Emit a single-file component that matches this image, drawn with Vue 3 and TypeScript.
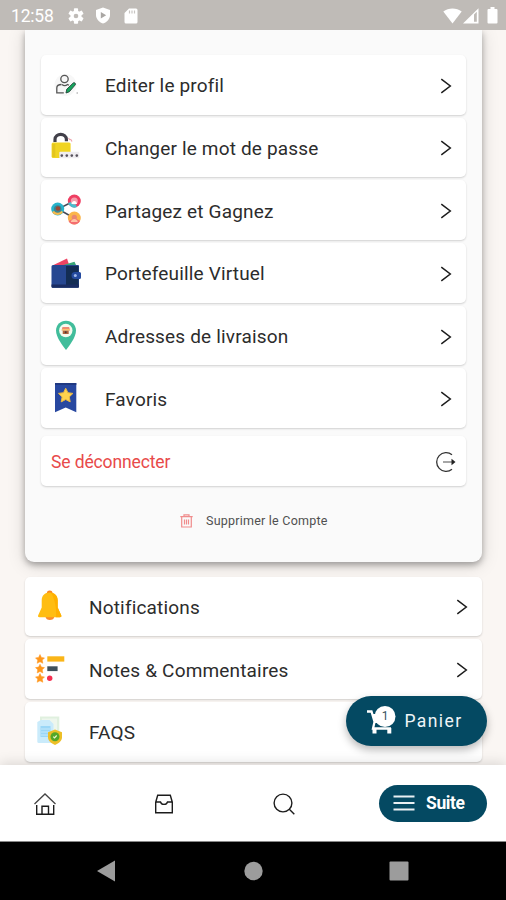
<script setup lang="ts">
interface MenuItem {
  icon: string
  label: string
}

const accountItems: MenuItem[] = [
  { icon: 'profile', label: 'Editer le profil' },
  { icon: 'lock', label: 'Changer le mot de passe' },
  { icon: 'share', label: 'Partagez et Gagnez' },
  { icon: 'wallet', label: 'Portefeuille Virtuel' },
  { icon: 'pin', label: 'Adresses de livraison' },
  { icon: 'bookmark', label: 'Favoris' },
]

const generalItems: MenuItem[] = [
  { icon: 'bell', label: 'Notifications' },
  { icon: 'reviews', label: 'Notes & Commentaires' },
  { icon: 'faq', label: 'FAQS' },
]
</script>

<template>
  <div class="screen">
    <header class="status">
      <span class="clock">12:58</span>
      <svg class="gear" width="16" height="16" viewBox="0 0 16 16">
        <g fill="#fff">
          <circle cx="8" cy="8" r="5.6" />
          <rect v-for="a in [0, 60, 120]" :key="a" x="5.9" y="0.3" width="4.2" height="15.4" rx="0.8" :transform="`rotate(${a} 8 8)`" />
        </g>
        <circle cx="8" cy="8" r="2.3" fill="#bfbbb7" />
      </svg>
      <svg class="shield" width="16" height="17" viewBox="0 0 16 17">
        <path d="M8 .5 15 3v5c0 4-3 7.200-7 8.500C4 15.200 1 12 1 8V3z" fill="#fff" />
        <path d="M5.800 5 11.200 8.200 5.800 11.400z" fill="#aaa7a4" />
      </svg>
      <svg class="sd" width="14" height="16" viewBox="0 0 14 16">
        <path d="M5 .5h7a1.500 1.500 0 0 1 1.500 1.500v12a1.500 1.500 0 0 1-1.500 1.500H2A1.500 1.500 0 0 1 .5 14V5z" fill="#fff" />
        <path d="M5.500 2.500v3M8 2.500v3M10.500 2.500v3" stroke="#c9c6c3" stroke-width="1.200" />
      </svg>
      <span class="grow"></span>
      <svg width="19" height="16" viewBox="0 0 19 16">
        <path d="M.3 3.600C5.500-.6 13.500-.6 18.700 3.600L9.500 15.500z" fill="#fff" />
      </svg>
      <svg class="signal" width="16" height="16" viewBox="0 0 16 16">
        <path d="M0 15.500 15.500.2v15.300z" fill="#fff" />
        <path d="M11 6.500 13.800 3.800v10h-2.800z" fill="#bfbbb7" />
      </svg>
      <svg class="battery" width="11" height="17" viewBox="0 0 11 17">
        <path d="M3.500 0h4v2H9.500a1 1 0 0 1 1 1v12.500a1 1 0 0 1-1 1h-8a1 1 0 0 1-1-1V3a1 1 0 0 1 1-1h2z" fill="#fff" />
      </svg>
    </header>

    <main class="content">
      <section class="card">
        <button v-for="item in accountItems" :key="item.icon" class="row">
          <svg v-if="item.icon === 'profile'" class="icon" viewBox="0 0 32 32">
            <circle cx="15.500" cy="16" r="11" fill="#f7f7f7" />
            <g fill="none" stroke="#555" stroke-width="1.300">
              <circle cx="14.500" cy="10" r="3.700" />
              <path d="M11.500 15.500C8 15.500 6.800 17 6.800 19v4.800h7M12 15.500c1.500 1.300 4 1.300 5.500 0l1.500.8" />
            </g>
            <path d="m16 24 .8-3.800 6.500-6.300c1.200-.8 2.700.6 2 1.900l-6 7z" fill="#14a45c" stroke="#23463a" stroke-width=".9" />
            <path d="M26.500 24h1.500" stroke="#999" />
          </svg>
          <svg v-else-if="item.icon === 'lock'" class="icon" viewBox="0 0 32 32">
            <path d="M5 11V8.500c0-6.800 11.400-6.800 11.400 0v1.800" fill="none" stroke="#42404a" stroke-width="3.200" />
            <rect x="1.600" y="11.500" width="19" height="15.500" rx="1.500" fill="#f0d422" />
            <path d="M2.300 13h3v13h-3z" fill="#e3c51e" />
            <path d="m18.500 7 1.500 2M20.500 8l1.500 2.500" stroke="#eda3ac" stroke-width="1.200" />
            <rect x="9.300" y="20.800" width="20" height="6.400" rx="1" fill="#efedf1" />
            <g fill="#57525d">
              <circle v-for="x in [11.800, 16.800, 21.800, 26.800]" :key="x" :cx="x" cy="24.600" r="1.300" />
            </g>
          </svg>
          <svg v-else-if="item.icon === 'share'" class="icon" viewBox="0 0 32 32">
            <path d="M24 7 8 15l16 9" fill="none" stroke="#444a56" stroke-width="1.500" />
            <circle cx="24.300" cy="7" r="6.500" fill="#ef3e62" />
            <path d="M18 9a6.500 6.500 0 0 0 9 4l-3-6z" fill="#48bccd" />
            <circle cx="24.300" cy="7" r="3.500" fill="#f59cab" />
            <path d="M21.500 10c.5-4 5-4 5.500 0z" fill="#fff" />
            <circle cx="7.700" cy="15" r="6.500" fill="#27b4cc" />
            <path d="M2 18a6.500 6.500 0 0 0 11 0l-5-3z" fill="#f8b94c" />
            <circle cx="7.700" cy="15" r="3.800" fill="#3d8592" />
            <circle cx="8" cy="14.500" r="2.300" fill="#994938" />
            <circle cx="24.300" cy="24" r="6.500" fill="#fbb54b" />
            <path d="M18.500 27a6.500 6.500 0 0 0 11.500 0l-5-3z" fill="#f46d71" />
            <circle cx="24.300" cy="23.300" r="2.600" fill="#e98672" />
            <path d="M20.800 28c.5-4 6.500-4 7 0z" fill="#ffc3a5" />
          </svg>
          <svg v-else-if="item.icon === 'wallet'" class="icon" viewBox="0 0 32 32">
            <path d="M3.500 8 17 1.600 19.500 9h-16z" fill="#ee4463" />
            <path d="M10 9 24.500 4.800 26.500 9z" fill="#38a578" />
            <path d="M3 8h25a1 1 0 0 1 1 1v20.500a1.300 1.300 0 0 1-1.300 1.300H3a1.500 1.500 0 0 1-1.500-1.500V9.500A1.500 1.500 0 0 1 3 8z" fill="#264791" />
            <path d="M16 9h12.500v20.500h-12.500z" fill="#132d54" />
            <path d="M1.500 27.500H29v2c0 1-.5 1.300-1.300 1.300H3c-1 0-1.500-.5-1.500-1.500z" fill="#192c62" />
            <path d="M25 15h4.500a1.500 1.500 0 0 1 1.500 1.500v4a1.500 1.500 0 0 1-1.500 1.500H25a3.500 3.500 0 0 1 0-7z" fill="#244a9f" />
            <circle cx="25.300" cy="18.500" r="1.500" fill="#9eb8ea" />
          </svg>
          <svg v-else-if="item.icon === 'pin'" class="icon" viewBox="0 0 32 32">
            <path d="M16 .8c5.800 0 10 4.300 10 9.800C26 17 20 25 16 30 12 25 6 17 6 10.600 6 5.100 10.200.8 16 .8z" fill="#41bd9b" />
            <circle cx="15.800" cy="10.500" r="6.700" fill="#f5faee" />
            <path d="M12.500 7h6.600l1 3.500h-8.600z" fill="#ef8b72" />
            <path d="M12.700 10.500h6V14h-6z" fill="#af613d" />
            <path d="M12 9.800h8" stroke="#ffd76d" />
            <circle cx="15.700" cy="12.300" r="1" fill="#453a36" />
          </svg>
          <svg v-else class="icon" viewBox="0 0 32 32">
            <path d="M5 1h21.300v29.300l-10.600-4.800L5 30.300z" fill="#2848a0" />
            <path d="M5 1h21.300v2H5z" fill="#203982" />
            <path d="m15.700 6.200 2.200 4.500 5 .7-3.600 3.500.9 5-4.500-2.400-4.500 2.400.9-5-3.600-3.500 5-.7z" fill="#ffd34e" stroke="#e9b744" />
          </svg>
          <span class="label">{{ item.label }}</span>
          <svg class="chevron" viewBox="0 0 12 16"><path d="m1.300 1.200 9 6.800-9 6.800" /></svg>
        </button>

        <button class="logout">
          <span>Se déconnecter</span>
          <svg width="22" height="22" viewBox="0 0 22 22" fill="none" stroke="#333" stroke-width="1.300">
            <path d="M17 3.700a9.400 9.400 0 1 0 0 14.600" />
            <path d="M8 11h9" stroke="#888" stroke-width="1.500" />
            <path d="m16.500 7.800 4 3.200-4 3.200z" fill="#222" stroke="none" />
          </svg>
        </button>
        <button class="delete">
          <svg width="13" height="14" viewBox="0 0 13 14" fill="none" stroke="#f08c8c" stroke-width="1.200">
            <path d="M.3 2.700h12.400M4 2.700V.8h5v1.900M1.700 3v10h9.600V3M4.500 5.500v5M6.500 5.500v5M8.500 5.500v5" />
          </svg>
          <span>Supprimer le Compte</span>
        </button>
      </section>

      <section class="list">
        <button v-for="item in generalItems" :key="item.icon" class="row wide">
          <svg v-if="item.icon === 'bell'" class="icon" viewBox="0 0 32 32">
            <circle cx="15.700" cy="3.500" r="2.900" fill="#fa8520" />
            <path d="M11.500 26.500h8.800c0 4.800-8.800 4.800-8.800 0z" fill="#fb8a2b" />
            <path d="M15.700 2.500c5 0 8 3.200 8 8v7l3.500 7.800c.5 1.200 0 2-1.300 2H5.500c-1.300 0-1.800-.8-1.300-2l3.500-7.800v-7c0-4.800 3-8 8-8z" fill="#ffbd12" />
            <path d="M17 2.800c4 .5 6.700 3.500 6.700 7.700v7l3.500 7.800c.5 1.200 0 2-1.300 2h-4c1-8-1-18-4.900-24.500z" fill="#ffb000" />
          </svg>
          <svg v-else-if="item.icon === 'reviews'" class="icon" viewBox="0 0 32 32">
            <path v-for="y in [0, 9.700, 19]" :key="y" :transform="`translate(0 ${y})`" d="m6 1.500 1.400 2.900 3.100.5-2.200 2.200.5 3.200L6 8.800l-2.800 1.500.5-3.200-2.200-2.200 3.100-.5z" fill="#ff971c" stroke="#ff971c" stroke-width=".5" />
            <path d="M13.300 3.300h17v5.300h-17z" fill="#fab518" />
            <path d="M13.300 13.300h10.300v4.800H13.300z" fill="#3e505c" />
            <circle cx="15.700" cy="25.200" r="2.700" fill="#f52e50" />
          </svg>
          <svg v-else class="icon" viewBox="0 0 32 32">
            <path d="M6 .5h19.300v22H6z" fill="#e0f0df" />
            <path d="M8 2.500h15v18H8z" fill="#eef6ed" />
            <path d="M7 4h8.500l4 4v19H4.500c-.8 0-1.200-.5-1.200-1.200V6z" fill="#caebfb" />
            <path d="M6.500 10h10v11h-10z" fill="#9bd7f7" />
            <path d="M7 13h9M7 16h9M7 19h9" stroke="#c5e9fb" />
            <path d="m21 13.500 7 2.700v5c0 3.500-3 6-7 7.700-4-1.700-7-4.200-7-7.700v-5z" fill="#edbf27" />
            <circle cx="21" cy="20.700" r="4.500" fill="#55a728" />
            <path d="m19.300 20.700 1.200 1.200 2.200-2.400" fill="none" stroke="#eef9cb" stroke-width="1.200" />
          </svg>
          <span class="label">{{ item.label }}</span>
          <svg class="chevron" viewBox="0 0 12 16"><path d="m1.300 1.200 9 6.800-9 6.800" /></svg>
        </button>
      </section>
    </main>

    <button class="cart">
      <svg width="32" height="32" viewBox="0 0 32 32">
        <path d="M2 6.500h4.500l3 10h15M9.500 17l-1.500 6.500h18" fill="none" stroke="#fff" stroke-width="2.300" />
        <path d="M7.500 9h18l-1.500 9H10z" fill="#fff" />
        <path d="M7.500 23h4v5.500h-4zM22.300 23h4v5.500h-4z" fill="#fff" />
        <circle cx="20" cy="11.500" r="10.500" fill="#fff" />
        <text x="20" y="15.300" text-anchor="middle" class="count">1</text>
      </svg>
      <span>Panier</span>
    </button>

    <nav class="tabs">
      <svg class="tab home" viewBox="0 0 24 24">
        <path d="M1.500 12 12 2l10.500 10" stroke="#444" stroke-width="1.300" />
        <path d="M3.700 13v9.300h17V13M9 22v-7.800h6.500V22" />
      </svg>
      <svg class="tab box" viewBox="0 0 24 24">
        <path d="M3.700 10.200 5.700 3.300h12.600l2 6.900v10.600H3.700zM3.700 10h4.800c1 3.200 6 3.200 7 0h4.800" />
      </svg>
      <svg class="tab search" viewBox="0 0 24 24">
        <circle cx="11" cy="11" r="8.900" /><path d="m17.300 17.300 5 5" />
      </svg>
      <button class="more">
        <svg width="22" height="16" viewBox="0 0 22 16" stroke="#e8f0f3" stroke-width="1.800">
          <path d="M.5 1.500h21M.5 8h21M.5 14.500h21" />
        </svg>
        <span>Suite</span>
      </button>
    </nav>

    <footer class="system">
      <svg width="506" height="58" viewBox="0 0 506 58" fill="#9c9c9c">
        <path d="M97 29 115 18.500v21z" />
        <circle cx="253.500" cy="29" r="9.200" />
        <rect x="389.500" y="19.500" width="19" height="19" rx="1" />
      </svg>
    </footer>
  </div>
</template>

<style>
body {
  margin: 0;
  background: #faf7f4;
}
</style>

<style scoped>
.screen {
  position: relative;
  display: flex;
  flex-direction: column;
  width: 506px;
  height: 900px;
  overflow: hidden;
  font-family: Roboto, "Liberation Sans", sans-serif;
  background: #faf6f3;
}
button {
  border: 0;
  padding: 0;
  margin: 0;
  font: inherit;
  text-align: left;
}
svg {
  display: block;
  flex: none;
}
.status {
  position: relative;
  z-index: 2;
  display: flex;
  align-items: center;
  flex: none;
  box-sizing: border-box;
  height: 30px;
  padding: 1px 8px 0 11px;
  background: #bfbbb7;
}
.clock {
  width: 57px;
  color: #fff;
  font-size: 17.500px;
  letter-spacing: -0.2px;
  line-height: 30px;
}
.shield { margin-left: 11px; }
.sd { margin-left: 13px; }
.grow { flex: 1; }
.signal { margin-left: 1px; }
.battery { margin-left: 8px; }
.content {
  flex: none;
  box-sizing: border-box;
  height: 735px;
  padding: 0 24px 0 25px;
  overflow: hidden;
}
.card {
  display: flex;
  flex-direction: column;
  gap: 3.200px;
  box-sizing: border-box;
  height: 532px;
  padding: 25px 16px 0;
  border-radius: 0 0 9px 9px;
  background: #fafafa;
  box-shadow: 0 3px 6px rgba(0, 0, 0, 0.3), 0 3px 18px rgba(0, 0, 0, 0.15);
}
.row {
  display: flex;
  align-items: center;
  flex: none;
  box-sizing: border-box;
  height: 59.500px;
  padding: 2px 14px 0 9px;
  border-radius: 5px;
  background: #fff;
  box-shadow: 0 1px 2px rgba(0, 0, 0, 0.17);
}
.icon {
  width: 32px;
  height: 32px;
  margin-bottom: 2px;
}
.label {
  flex: 1;
  margin-left: 23px;
  color: #2c2c2c;
  font-size: 19px;
  letter-spacing: 0.17px;
  white-space: nowrap;
}
.chevron {
  width: 12px;
  height: 16px;
  fill: none;
  stroke: #1c1c1c;
  stroke-width: 1.500;
}
.logout {
  display: flex;
  align-items: center;
  justify-content: space-between;
  flex: none;
  box-sizing: border-box;
  height: 50px;
  margin-top: 5px;
  padding: 2px 9px 0 10px;
  border-radius: 5px;
  background: #fff;
  box-shadow: 0 1px 2px rgba(0, 0, 0, 0.17);
  color: #e84a4a;
  font-size: 17.500px;
  letter-spacing: -0.12px;
}
.delete {
  display: flex;
  align-items: center;
  gap: 13px;
  margin-top: 24px;
  padding-left: 139px;
  background: none;
  color: #505050;
  font-size: 12.500px;
  letter-spacing: 0.23px;
}
.list {
  display: flex;
  flex-direction: column;
  gap: 3.500px;
  position: relative;
  padding-top: 14.500px;
}
.row.wide { height: 59.400px; }
.cart {
  position: absolute;
  left: 345.500px;
  top: 696px;
  z-index: 3;
  display: flex;
  align-items: center;
  gap: 8px;
  box-sizing: border-box;
  width: 141.500px;
  height: 49.500px;
  padding: 0 0 0 19px;
  border-radius: 25px;
  background: #044962;
  color: #eff5f7;
  font-size: 17.500px;
  letter-spacing: 1.400px;
  box-shadow: 0 4px 8px rgba(0, 0, 0, 0.28);
}
.count {
  fill: #39535e;
  font-size: 12px;
  letter-spacing: 0;
}
.tabs {
  position: relative;
  z-index: 2;
  display: flex;
  align-items: center;
  flex: none;
  box-sizing: border-box;
  height: 77px;
  padding: 0 19px 0 33px;
  background: #fff;
  border-bottom: 1px solid #888;
  box-shadow: 0 -2px 12px rgba(0, 0, 0, 0.13);
}
.tab {
  width: 24px;
  height: 24px;
  margin-top: 1px;
  fill: none;
  stroke: #1c1c1c;
  stroke-width: 1.400;
}
.box { margin-left: 95px; }
.search { margin-left: 96px; }
.more {
  display: flex;
  align-items: center;
  gap: 11px;
  box-sizing: border-box;
  width: 108px;
  height: 37px;
  margin-left: auto;
  padding-left: 14px;
  border-radius: 19px;
  background: #044962;
  color: #fff;
  font-size: 17.500px;
  font-weight: 700;
  letter-spacing: -0.4px;
}
.system {
  flex: none;
  height: 58px;
  background: #000;
}
</style>
